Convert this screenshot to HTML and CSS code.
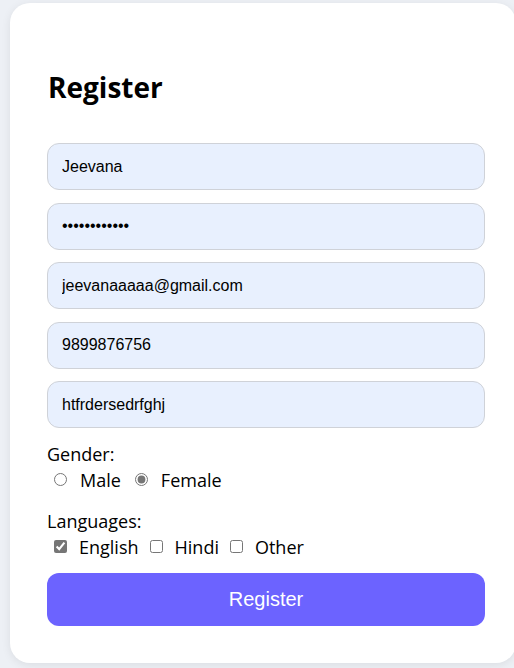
FILE: index.html
```html
<!DOCTYPE html>
<html>
<head>
<meta charset="utf-8">
<link rel="stylesheet" href="styles.css">
</head>
<body>
<form class="card">
  <h2 class="title">Register</h2>
  <input class="field" type="text" value="Jeevana">
  <input class="field" type="password" value="jeevana12345">
  <input class="field" type="email" value="jeevanaaaaa@gmail.com">
  <input class="field" type="text" value="9899876756">
  <input class="field" type="text" value="htfrdersedrfghj">
  <div class="group">
    <div class="label">Gender:</div>
    <div class="options">
      <label class="opt"><input type="radio" name="g"> Male</label>
      <label class="opt"><input type="radio" name="g" checked> Female</label>
    </div>
  </div>
  <div class="group langs">
    <div class="label">Languages:</div>
    <div class="options">
      <label class="opt"><input type="checkbox" checked> English</label>
      <label class="opt"><input type="checkbox"> Hindi</label>
      <label class="opt"><input type="checkbox"> Other</label>
    </div>
  </div>
  <button class="btn" type="button">Register</button>
</form>
</body>
</html>
```

FILE: styles.css
```css
html, body {
  margin: 0;
  background: #edf0f5;
}
body {
  padding: 3px 0 0 10px;
  overflow: hidden;
  height: 668px;
  box-sizing: border-box;
}
.card {
  box-sizing: border-box;
  width: 506px;
  height: 660px;
  background: #fff;
  border-radius: 20px;
  box-shadow: 0 2px 10px rgba(0,0,0,0.08);
  padding: 64px 31px 0 37px;
  font-family: "Open Sans", sans-serif;
  color: #000;
}
.title {
  margin: 0 0 36px 1px;
  font-size: 28px;
  line-height: 40px;
  font-weight: 700;
}
.field {
  display: block;
  box-sizing: border-box;
  width: 438px;
  height: 47px;
  margin: 0 0 12.5px;
  padding: 0 14px;
  border: 1px solid #cfd2d8;
  border-radius: 12px;
  background: #e8f0fe;
  font-family: "Liberation Sans", Arial, sans-serif;
  font-size: 16px;
  color: #000;
  outline: none;
}
.group {
  margin-top: 3px;
  margin-bottom: 15px;
}
.langs {
  margin-top: 0;
  margin-bottom: 13px;
}
.label {
  font-size: 18px;
  line-height: 26px;
}
.options {
  display: flex;
  gap: 7px;
  font-size: 18px;
  line-height: 26px;
}
.langs .options {
  gap: 4px;
}
.opt {
  display: flex;
  align-items: center;
}
.opt input {
  margin: 0 13px 0 7px;
  accent-color: #767676;
}
.langs .opt input {
  margin-right: 12px;
}
.btn {
  display: block;
  width: 438px;
  height: 53px;
  margin: 0;
  border: none;
  border-radius: 12px;
  background: #6c63ff;
  color: #fff;
  font-family: "Liberation Sans", Arial, sans-serif;
  font-size: 20px;
}
```
